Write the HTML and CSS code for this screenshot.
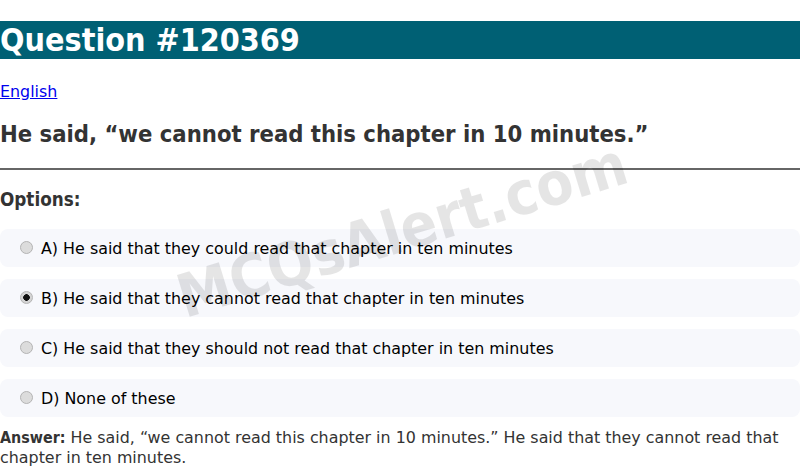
FILE: index.html
```html
<!DOCTYPE html>
<html>
<head>
<meta charset="utf-8">
<link rel="stylesheet" href="styles.css">
</head>
<body>
<h1 class="title">Question #120369</h1>
<p class="cat"><a href="#">English</a></p>
<h2 class="question">He said, “we cannot read this chapter in 10 minutes.”</h2>
<hr class="rule">
<h3 class="opts-head">Options:</h3>
<div class="options">
  <label class="option"><input type="radio" name="q"><span>A) He said that they could read that chapter in ten minutes</span></label>
  <label class="option"><input type="radio" name="q" checked><span>B) He said that they cannot read that chapter in ten minutes</span></label>
  <label class="option"><input type="radio" name="q"><span>C) He said that they should not read that chapter in ten minutes</span></label>
  <label class="option"><input type="radio" name="q"><span>D) None of these</span></label>
</div>
<p class="answer"><b>Answer:</b> He said, “we cannot read this chapter in 10 minutes.” He said that they cannot read that chapter in ten minutes.</p>
<div class="watermark">MCQsAlert.com</div>
</body>
</html>
```
FILE: styles.css
```css
html, body {
  margin: 0;
  padding: 0;
}
body {
  font-family: "DejaVu Sans", sans-serif;
  font-size: 15.9px;
  color: #000;
  position: relative;
  overflow: hidden;
  height: 467px;
}
.title {
  font-family: "DejaVu Sans Condensed", "DejaVu Sans", sans-serif;
  font-size: 32px;
  font-weight: bold;
  color: #fff;
  background: #006074;
  margin: 21px 0 0;
  line-height: 38px;
}
.cat {
  margin: 0;
  padding-top: 23px;
  line-height: 19px;
}
.cat a {
  color: #0000ee;
}
.question {
  font-family: "DejaVu Sans Condensed", "DejaVu Sans", sans-serif;
  font-size: 23.6px;
  color: #333;
  margin: 19px 0 20px;
  line-height: 28px;
}
.rule {
  border: none;
  border-top: 2px solid #666;
  margin: 0;
}
.opts-head {
  font-family: "DejaVu Sans Condensed", "DejaVu Sans", sans-serif;
  font-size: 18.72px;
  color: #333;
  margin: 19px 0 18px;
  line-height: 22px;
}
.options {
  display: flex;
  flex-direction: column;
  gap: 12px;
}
.option {
  display: flex;
  align-items: center;
  gap: 8px;
  height: 38px;
  box-sizing: border-box;
  padding: 1px 20px 0;
  background: #f7f8fc;
  border-radius: 8px;
  color: #000;
}
.option input {
  appearance: none;
  -webkit-appearance: none;
  width: 13px;
  height: 13px;
  margin: -3px 0 0 0;
  border-radius: 50%;
  border: 1px solid #b4b4b4;
  background: #dcdcdc;
  box-sizing: border-box;
}
.option input:checked {
  background: radial-gradient(circle, #111 0, #111 3px, #d4d4d4 3.6px);
}
.answer {
  margin: 11px 0 0;
  line-height: 20px;
  color: #333;
}
.answer b {
  font-family: "DejaVu Sans Condensed", "DejaVu Sans", sans-serif;
  color: #333;
}
.watermark {
  position: absolute;
  left: 402px;
  top: 230px;
  transform: translate(-50%, -50%) rotate(-17deg);
  font-family: "DejaVu Sans Condensed", "DejaVu Sans", sans-serif;
  font-size: 60px;
  font-weight: bold;
  color: rgba(0, 0, 0, 0.1);
  white-space: nowrap;
  pointer-events: none;
}
```
